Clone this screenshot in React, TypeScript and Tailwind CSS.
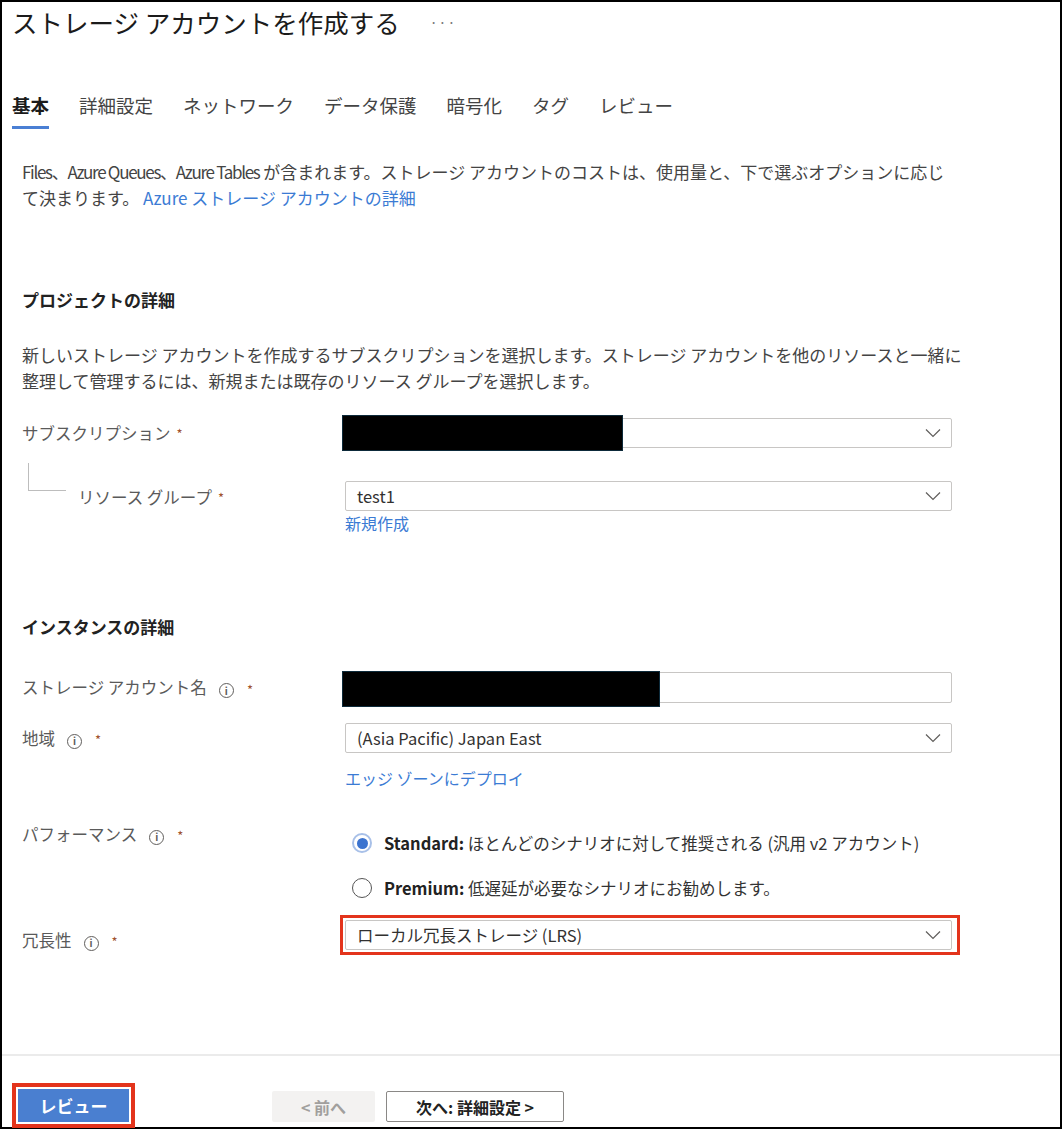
import { ReactNode } from 'react';

function Chevron() {
  return (
    <svg width="16" height="10" viewBox="0 0 16 10" className="shrink-0">
      <path d="M1 1.5l7 7 7-7" fill="none" stroke="#605e5c" strokeWidth="1.2" />
    </svg>
  );
}

function Info() {
  return (
    <span className="inline-flex items-center justify-center w-[15px] h-[15px] rounded-full border border-[#605e5c] text-[#605e5c] text-[10px] leading-none font-bold">
      i
    </span>
  );
}

function Star() {
  return <span className="text-[#a0522d] text-[13px] leading-none">*</span>;
}

function Select({ value, redacted }: { value?: string; redacted?: boolean }) {
  return (
    <div className="relative w-[607px] h-[30px] border border-[#c8c6c4] rounded-[2px] flex items-center justify-between pl-[11px] pr-[10px] bg-white">
      <span className="text-[16.5px] text-[#323130]">{value}</span>
      <Chevron />
      {redacted && <div className="absolute -left-[4px] -top-[4px] w-[281px] h-[36px] bg-black border border-[#0d2a3a]" />}
    </div>
  );
}

function Label({ children }: { children: ReactNode }) {
  return <span className="text-[16.5px] text-[#5a5a5a]">{children}</span>;
}

function Radio({ checked, title, text }: { checked?: boolean; title: string; text: string }) {
  return (
    <div className="flex items-center h-[26px] pl-[7px]">
      {checked ? (
        <span className="w-[20px] h-[20px] rounded-full border-2 border-[#a8c0e8] flex items-center justify-center">
          <span className="w-[11px] h-[11px] rounded-full bg-[#3b73cf]" />
        </span>
      ) : (
        <span className="w-[20px] h-[20px] rounded-full border border-[#555]" />
      )}
      <span className="ml-[12px] text-[16.5px] text-[#333]">
        <span className="font-bold text-[#222]">{title}</span> {text}
      </span>
    </div>
  );
}

function App() {
  const tabs = ['基本', '詳細設定', 'ネットワーク', 'データ保護', '暗号化', 'タグ', 'レビュー'];

  return (
    <div className="w-[1062px] h-[1129px] border-2 border-black bg-white flex flex-col font-['Noto_Sans_CJK_JP',sans-serif] text-[#333]">
      <div className="flex-1 flex flex-col">
        <div className="h-[40px] flex items-center pl-[10px]">
          <h1 className="text-[25.5px] text-[#1b1b1b] leading-none">ストレージ アカウントを作成する</h1>
          <span className="ml-[30px] text-[14px] text-[#777] tracking-[1px]">···</span>
        </div>

        <div className="mt-[48px] pl-[10px] flex gap-[30px]">
          {tabs.map((t, i) => (
            <div key={t} className="flex flex-col">
              <span className={`h-[30px] leading-[30px] text-[18.5px] ${i === 0 ? 'font-bold text-[#1b1b1b]' : 'text-[#444]'}`}>{t}</span>
              <div className={`mt-[6px] h-[3px] ${i === 0 ? 'bg-[#4a7fd4]' : 'bg-transparent'}`} />
            </div>
          ))}
        </div>

        <div className="px-[20px] flex flex-col">
          <p className="mt-[30px] text-[17px] leading-[26px] text-[#444] whitespace-nowrap">
            <span className="tracking-[-1.3px]">Files、Azure Queues、Azure Tables</span> が含まれます。ストレージ アカウントのコストは、使用量と、下で選ぶオプションに応じ
            <br />
            て決まります。 <span className="text-[#3b7bd4]">Azure ストレージ アカウントの詳細</span>
          </p>

          <h2 className="mt-[76px] text-[17px] leading-[26px] font-bold text-[#222]">プロジェクトの詳細</h2>
          <p className="mt-[29px] text-[17px] leading-[26px] text-[#444] whitespace-nowrap">
            新しいストレージ アカウントを作成するサブスクリプションを選択します。ストレージ アカウントを他のリソースと一緒に
            <br />
            整理して管理するには、新規または既存のリソース グループを選択します。
          </p>

          <div className="mt-[24px] flex items-center h-[30px]">
            <div className="w-[323px] flex items-center gap-[6px]">
              <Label>サブスクリプション</Label>
              <Star />
            </div>
            <Select redacted />
          </div>

          <div className="mt-[7px] flex h-[56px]">
            <div className="w-[323px] flex">
              <div className="ml-[6px] mt-[8px] w-[38px] h-[28px] border-l border-b border-[#bdbdbd]" />
              <div className="ml-[12px] self-end mb-[1px] h-[26px] flex items-center gap-[6px]">
                <Label>リソース グループ</Label>
                <Star />
              </div>
            </div>
            <div className="self-end">
              <Select value="test1" />
            </div>
          </div>
          <span className="ml-[323px] mt-[1px] text-[16px] leading-[22px] text-[#3b7bd4]">新規作成</span>

          <h2 className="mt-[80px] text-[17px] leading-[26px] font-bold text-[#222]">インスタンスの詳細</h2>

          <div className="mt-[32px] flex items-center h-[31px]">
            <div className="w-[323px] flex items-center">
              <Label>ストレージ アカウント名</Label>
              <span className="ml-[12px]"><Info /></span>
              <span className="ml-[13px]"><Star /></span>
            </div>
            <div className="relative w-[607px] h-[31px] border border-[#c8c6c4] rounded-[2px]">
              <div className="absolute -left-[4px] -top-[2px] w-[318px] h-[36px] bg-black border border-[#0d2a3a]" />
            </div>
          </div>

          <div className="mt-[20px] flex items-center h-[30px]">
            <div className="w-[323px] flex items-center">
              <Label>地域</Label>
              <span className="ml-[12px]"><Info /></span>
              <span className="ml-[13px]"><Star /></span>
            </div>
            <Select value="(Asia Pacific) Japan East" />
          </div>
          <span className="ml-[323px] mt-[14px] text-[16px] leading-[22px] text-[#3b7bd4]">エッジ ゾーンにデプロイ</span>

          <div className="mt-[31px] flex items-start">
            <div className="w-[323px] flex items-center h-[26px] mt-[1px]">
              <Label>パフォーマンス</Label>
              <span className="ml-[12px]"><Info /></span>
              <span className="ml-[13px]"><Star /></span>
            </div>
            <div className="flex flex-col pt-[10px] gap-[19px]">
              <Radio checked title="Standard:" text="ほとんどのシナリオに対して推奨される (汎用 v2 アカウント)" />
              <Radio title="Premium:" text="低遅延が必要なシナリオにお勧めします。" />
            </div>
          </div>

          <div className="mt-[14px] flex items-start">
            <div className="w-[318px] flex items-center h-[26px] mt-[12px]">
              <Label>冗長性</Label>
              <span className="ml-[12px]"><Info /></span>
              <span className="ml-[13px]"><Star /></span>
            </div>
            <div className="border-[3px] border-[#e3341c] p-[2px] pr-[5px]">
              <Select value="ローカル冗長ストレージ (LRS)" />
            </div>
          </div>
        </div>
      </div>

      <div className="h-[73px] border-t-2 border-[#ebebeb] pl-[10px] pt-[27px] flex items-start">
        <div className="border-[4px] border-[#e3341c] p-[2px] bg-white">
          <button className="w-[111px] h-[33px] bg-[#4a7fd0] text-white font-bold text-[17px]">レビュー</button>
        </div>
        <button className="ml-[137px] mt-[8px] w-[103px] h-[31px] bg-[#f3f2f1] text-[#a19f9d] text-[16px] font-bold rounded-[2px]">&lt;&nbsp;前へ</button>
        <button className="ml-[11px] mt-[8px] w-[178px] h-[31px] border border-[#8a8886] rounded-[2px] bg-white text-[#222] text-[16px] font-bold">次へ: 詳細設定 &gt;</button>
      </div>
    </div>
  );
}

export default App;
